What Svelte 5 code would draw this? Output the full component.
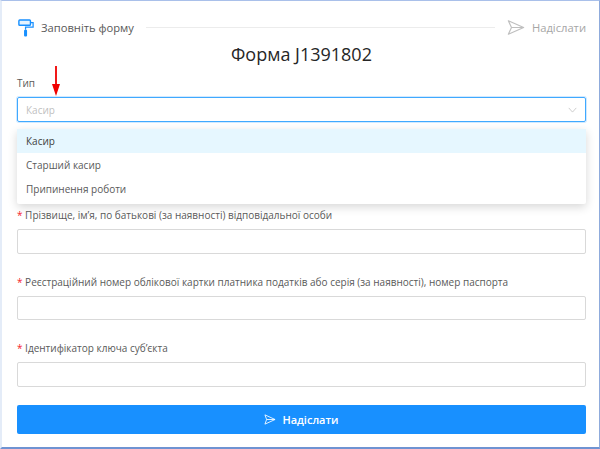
<script>
  const options = ["Касир", "Старший касир", "Припинення роботи"];

  const fields = [
    "Прізвище, ім’я, по батькові (за наявності) відповідальної особи",
    "Реєстраційний номер облікової картки платника податків або серія (за наявності), номер паспорта",
    "Ідентифікатор ключа суб’єкта"
  ];
</script>

<div class="page">
  <div class="steps">
    <svg class="roller" viewBox="0 0 18 20" aria-hidden="true">
      <rect x="1" y="1" width="13" height="6" rx="1" fill="#e6f4ff" stroke="#1890ff" stroke-width="1.6" />
      <path d="M14 4h3v5H8.5v3" fill="none" stroke="#1890ff" stroke-width="1.4" />
      <rect x="6.8" y="12" width="3.4" height="7.5" rx="1.2" fill="#1890ff" />
    </svg>
    <span class="step-title">Заповніть форму</span>
    <span class="step-line"></span>
    <svg class="send-big" viewBox="0 0 20 18" aria-hidden="true">
      <path d="M1.5 1.5 18.5 9 1.5 16.5 5 9ZM5 9h13" fill="none" stroke="#bfbfbf" stroke-width="1.3" stroke-linejoin="round" />
    </svg>
    <span class="step-title muted">Надіслати</span>
  </div>

  <h1>Форма J1391802</h1>

  <div class="field first">
    <div class="label">Тип</div>
    <div class="select">
      <span>Касир</span>
      <svg class="chevron" viewBox="0 0 12 8" aria-hidden="true">
        <path d="M1 1.2 6 6.8 11 1.2" fill="none" stroke="#bfbfbf" stroke-width="1" />
      </svg>
    </div>
    <ul class="menu">
      {#each options as option, i}
        <li class:active={i === 0}>{option}</li>
      {/each}
    </ul>
    <svg class="arrow" viewBox="0 0 8 30" aria-hidden="true">
      <path d="M3.1 0h1.8v18H8L4 30 0 18h3.1Z" fill="#f00000" />
    </svg>
  </div>

  {#each fields as text}
    <div class="field">
      <div class="label"><span class="req">*</span> {text}</div>
      <input type="text" aria-label={text} />
    </div>
  {/each}

  <button type="button">
    <svg class="send" viewBox="0 0 14 13" aria-hidden="true">
      <path d="M1 1 13 6.5 1 12 3 6.5ZM3 6.5h10" fill="none" stroke="#fff" stroke-width="1" stroke-linejoin="round" />
    </svg>
    Надіслати
  </button>
</div>

<style>
  :global(body) {
    background: #fff;
  }

  .page {
    box-sizing: border-box;
    width: 600px;
    height: 449px;
    padding: 16px 13px 0 15px;
    border-style: solid;
    border-width: 1px 1px 2px 2px;
    border-color: #a9c0ea #8fabdc #6f93d2 #e4ecf8;
    background: #fff;
    font-family: "Open Sans", "Noto Sans", sans-serif;
    font-size: 10px;
    color: #595959;
  }

  .steps {
    display: flex;
    align-items: center;
    height: 21px;
  }

  .roller {
    width: 16px;
    height: 18px;
    margin: 0 7px 0 1px;
  }

  .step-title {
    font-size: 11.2px;
  }

  .muted {
    color: #a6a6a6;
  }

  .step-line {
    flex: 1;
    height: 1px;
    margin: 0 12px;
    background: #ececec;
  }

  .send-big {
    width: 18px;
    height: 17px;
    margin-right: 7px;
  }

  h1 {
    margin: 4px 0 0;
    font-size: 18px;
    line-height: 24px;
    font-weight: 400;
    text-align: center;
    color: #262626;
  }

  .field {
    position: relative;
    height: 66.5px;
  }

  .first {
    margin-top: 9px;
    height: 132px;
  }

  .label {
    height: 22px;
    line-height: 17px;
    color: #595959;
  }

  .req {
    color: #f5222d;
  }

  .select {
    box-sizing: border-box;
    display: flex;
    align-items: center;
    justify-content: space-between;
    height: 25px;
    padding: 0 8px;
    border: 1px solid #40a9ff;
    border-radius: 2px;
    box-shadow: 0 0 0 1px rgba(24, 144, 255, 0.2);
    color: #bfbfbf;
  }

  .chevron {
    width: 9px;
    height: 6px;
  }

  .menu {
    position: absolute;
    top: 54px;
    left: 0;
    right: 0;
    margin: 0;
    padding: 0 0 2.5px;
    list-style: none;
    background: #fff;
    border-radius: 2px;
    box-shadow: 0 3px 10px rgba(0, 0, 0, 0.16);
    color: #595959;
  }

  .menu li {
    height: 24.2px;
    line-height: 24px;
    padding: 0 9px;
  }

  .menu .active {
    background: #e6f7ff;
    color: #404040;
  }

  .arrow {
    position: absolute;
    top: -9px;
    left: 35px;
    width: 8px;
    height: 30px;
  }

  input {
    display: block;
    box-sizing: border-box;
    width: 100%;
    height: 24.5px;
    padding: 0 8px;
    border: 1px solid #d9d9d9;
    border-radius: 2px;
    background: #fff;
  }

  button {
    display: flex;
    align-items: center;
    justify-content: center;
    gap: 6px;
    width: 100%;
    height: 29px;
    margin-top: -1.5px;
    border: 0;
    border-radius: 2px;
    background: #1890ff;
    color: #fff;
    font: 600 11px "Open Sans", "Noto Sans", sans-serif;
  }

  .send {
    width: 12px;
    height: 11px;
  }
</style>
